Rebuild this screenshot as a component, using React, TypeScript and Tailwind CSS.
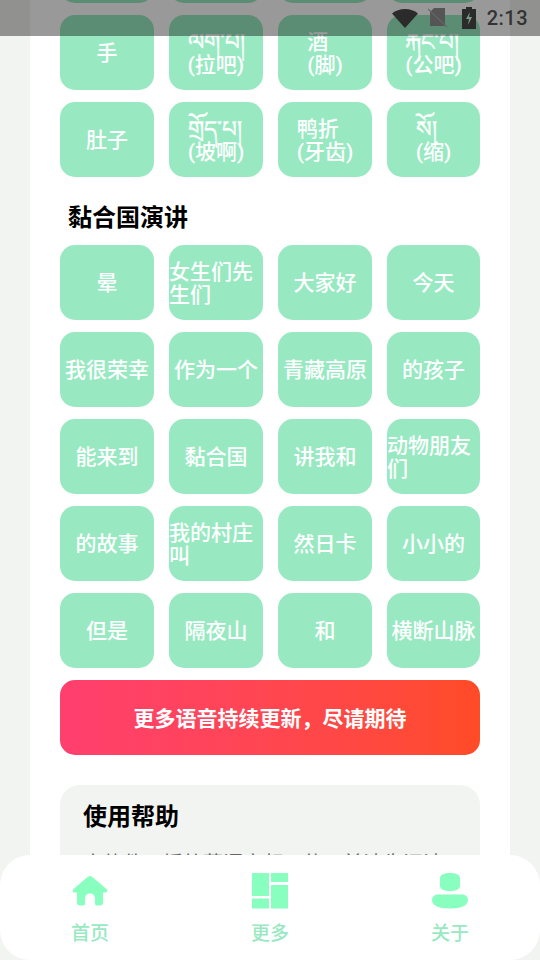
const FONT = "font-['Roboto','Noto_Sans_CJK_SC','DejaVu_Sans',sans-serif]";

const tibetanRows = [
  ['手', 'ལག་པ།\n(拉吧)', '酒\n(脚)', 'རྐང་པ།\n(公吧)'],
  ['肚子', 'གྲོད་པ།\n(坡啊)', '鸭折\n(牙齿)', 'སོ།\n(缩)'],
];

const speech = [
  '晕', '女生们先生们', '大家好', '今天',
  '我很荣幸', '作为一个', '青藏高原', '的孩子',
  '能来到', '黏合国', '讲我和', '动物朋友们',
  '的故事', '我的村庄叫', '然日卡', '小小的',
  '但是', '隔夜山', '和', '横断山脉',
];

const isTibetan = (text: string) => /[\u0F00-\u0FFF]/.test(text);

function VoiceButton({ label }: { label: string }) {
  return (
    <div className="flex h-[75px] items-center justify-center overflow-hidden rounded-[15px] bg-[#98e9c2] pt-[2px] text-[21px] leading-[23px] font-medium text-white">
      <div>
        {label.split('\n').map((line) => (
          <div key={line} className={isTibetan(line) ? 'text-[23px] [-webkit-text-stroke:0.4px_white]' : ''}>
            {line}
          </div>
        ))}
      </div>
    </div>
  );
}

function NavItem({ icon, label }: { icon: React.ReactNode; label: string }) {
  return (
    <div className="flex w-[38px] flex-col items-center">
      <div className="flex h-[36px] w-[38px] items-center justify-center">{icon}</div>
      <span className="mt-[11px] text-[19px] leading-[28px] font-medium whitespace-nowrap text-[#98e9c2]">{label}</span>
    </div>
  );
}

export default function App() {
  return (
    <div className={`relative h-[960px] w-[540px] overflow-hidden bg-[#f2f4f1] ${FONT}`}>
      <div className="mx-[30px] -mt-[72px] h-[1100px] bg-white px-[30px]">
        <div className="grid grid-cols-[94px_94px_94px_93px] gap-x-[15px] gap-y-[12px]">
          {['', '', '', ''].map((label, i) => (
            <VoiceButton key={i} label={label} />
          ))}
          {tibetanRows.flat().map((label, i) => (
            <VoiceButton key={i} label={label} />
          ))}
        </div>
        <h2 className="mt-[25px] mb-[11px] pl-[8px] text-[24px] leading-[32px] font-bold text-black">黏合国演讲</h2>
        <div className="grid grid-cols-[94px_94px_94px_93px] gap-x-[15px] gap-y-[12px]">
          {speech.map((label) => (
            <VoiceButton key={label} label={label} />
          ))}
        </div>
        <div className="mt-[12px] flex h-[75px] items-center justify-center rounded-[15px] bg-gradient-to-r from-[#ff3f6e] to-[#ff4b26] pt-[4px] text-[21px] font-bold text-white">
          更多语音持续更新，尽请期待
        </div>
        <div className="mt-[30px] h-[200px] rounded-[20px] bg-[#f2f4f1] px-[23px] pt-[14px]">
          <h3 className="text-[24px] leading-[36px] font-bold text-black">使用帮助</h3>
          <p className="mt-[15px] text-[20px] leading-[28px] text-[#666]">本软件可播放藏语音频，使用前请先阅读</p>
        </div>
      </div>

      {/* status bar */}
      <div className="absolute inset-x-0 top-0 flex h-[36px] items-center justify-end bg-black/40 pr-[12px]">
        <svg viewBox="0 0 26 20" className="mr-[10px] h-[20px] w-[26px]">
          <path d="M0 5.5C3.5 2.5 8 1 13 1s9.500 1.500 13 4.500L13 20z" fill="#2b2b2b" />
        </svg>
        <svg viewBox="0 0 20 20" className="mr-[14px] h-[20px] w-[20px]">
          <path d="M6 0h11v18H2V4z" fill="#555" />
          <path d="M0 1l19 18" stroke="#666" strokeWidth="1.200" />
        </svg>
        <svg viewBox="0 0 14 22" className="mr-[11px] h-[22px] w-[14px]">
          <path d="M4 0h6v2h4v20H0V2h4z" fill="#2b2b2b" />
          <path d="M8 5 4 12h3l-1 6 4-8H7z" fill="#7a9a8a" />
        </svg>
        <span className="text-[20px] font-medium tracking-[0.5px] text-[#333]">2:13</span>
      </div>

      {/* bottom nav */}
      <div className="absolute inset-x-0 bottom-0 flex h-[105px] justify-between rounded-t-[30px] rounded-b-[30px] bg-white pt-[18px] pr-[71px] pl-[71px]">
        <NavItem
          label="首页"
          icon={
            <svg viewBox="0 0 36 32" className="h-[32px] w-[36px]" fill="#88ffbf">
              <path d="M18 1c1 0 2 .500 3 1.500L34.500 14c1.500 1.300.800 3.500-1 3.500H31v10c0 2-1 3-3 3h-3c-1.500 0-2-1-2-2v-5c0-3-2-5-5-5s-5 2-5 5v5c0 1-.500 2-2 2H8c-2 0-3-1-3-3v-10H2.500c-1.800 0-2.500-2.200-1-3.500L15 2.500C16 1.500 17 1 18 1z" />
            </svg>
          }
        />
        <NavItem
          label="更多"
          icon={
            <svg viewBox="0 0 36 36" className="h-[36px] w-[36px]" fill="#88ffbf">
              <rect x="0" y="0" width="17" height="23" />
              <rect x="0" y="25.500" width="17" height="10" />
              <rect x="19" y="0" width="17" height="9" />
              <rect x="19" y="12" width="17" height="23.500" />
            </svg>
          }
        />
        <NavItem
          label="关于"
          icon={
            <svg viewBox="0 0 36 36" className="h-[36px] w-[36px]" fill="#88ffbf">
              <path d="M8 5c0-3 4-5 10-5s10 2 10 5v8c0 3-4 5-10 5s-10-2-10-5z" />
              <path d="M0 27c0-3.500 3-5.500 6-5.500h24c3 0 6 2 6 5.500 0 5-6 8.500-18 8.500S0 32 0 27z" />
            </svg>
          }
        />
      </div>
    </div>
  );
}
